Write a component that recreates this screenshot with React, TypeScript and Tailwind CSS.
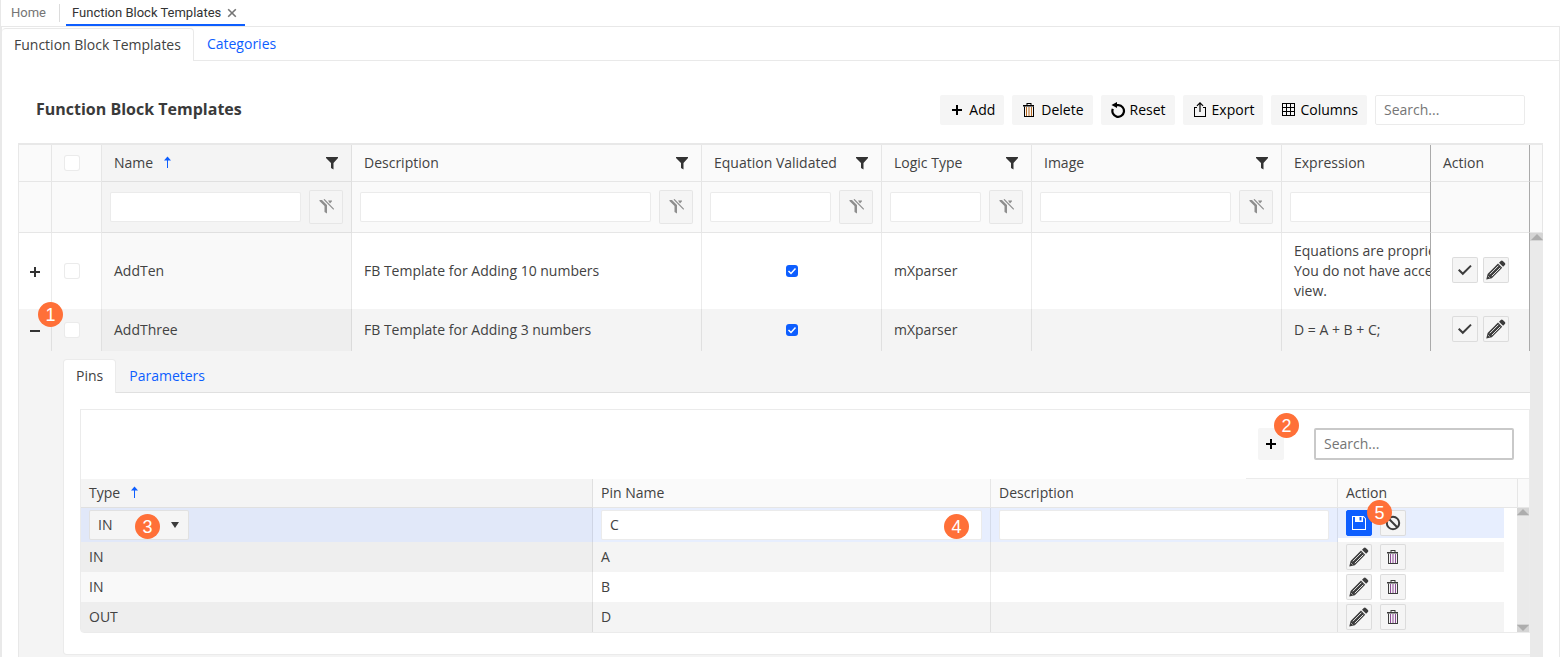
import React from "react";

const head = "border-b border-r border-black/8 bg-[#fafafa]";
const box = "block h-[30px] w-full min-w-0 rounded-xs border border-black/8 bg-white px-2 pb-0.5 text-[#424242] outline-none";

function Icon({ d, size = 16, className = "" }: { d: string; size?: number; className?: string }) {
  return (
    <svg width={size} height={size} viewBox="0 0 16 16" className={`shrink-0 ${className}`} fill="currentColor" fillRule="evenodd" aria-hidden="true">
      <path d={d} />
    </svg>
  );
}

const PLUS = "M7 3h2v4h4v2h-4v4h-2v-4h-4v-2h4z";
const MINUS = "M3 7h10v2h-10z";
const EXPORT = "M8 0l3.5 3.5-.8.8L8.6 2.3V10H7.4V2.3L5.3 4.3l-.8-.8zM2 5h3v1H3v8h10V6h-2V5h3v10H2z";
const GRID = "M2 1h13v13H2zM3 2v3h3V2zM7 2v3h3V2zM11 2v3h3V2zM3 6v3h3V6zM7 6v3h3V6zM11 6v3h3V6zM3 10v3h3v-3zM7 10v3h3v-3zM11 10v3h3v-3z";
const FUNNEL = "M2 2h12v1L9.5 8v6.500L7 13V8L2 3z";
const SORT = "M8.500 1.500L12 5.500H9V13H8V5.500H5z";
const SAVE = "M1 1h11.600l2.400 2.400v11.600H1zM2 2v12h12V3.800L12.200 2H12v5H4V2zM8.500 2v3.500h2V2z";

function Trash({ stripe }: { stripe: string }) {
  return (
    <svg width="16" height="16" viewBox="0 0 16 16" fill="currentColor" className="shrink-0" aria-hidden="true">
      <path d="M5.500 1h5v2H13v1.500H2V3h3.500zM6.500 2v1h3V2z" fillRule="evenodd" />
      <path d="M3 4.500h1V15H3zM12 4.500h1V15h-1zM3 14h10v1H3z" />
      <path d="M5 5h1v9H5zM7.500 5h1v9h-1zM10 5h1v9h-1z" fill={stripe} />
    </svg>
  );
}

function Pencil() {
  return (
    <svg width="20" height="20" viewBox="0 0 20 20" fill="currentColor" className="shrink-0" aria-hidden="true">
      <path d="M.3 19.500L1.600 14 12 3.600l4.200 4.200L5.800 18.200z" />
      <path d="M3.800 14.300L12.400 5.700M5.800 16.200L14.300 7.700" stroke="#f5f5f5" strokeWidth=".9" />
      <path d="M2.200 16.200l1.400 1.400" stroke="#f5f5f5" strokeWidth=".7" />
      <path d="M13 2.700L14.800.900q1-.9 2 0l2.100 2.100q1 1 0 2L17.100 6.800z" />
    </svg>
  );
}

function ResetIcon() {
  return (
    <svg width="16" height="16" viewBox="0 0 16 16" fill="none" stroke="currentColor" strokeWidth="2.200" className="shrink-0" aria-hidden="true">
      <path d="M5.500 3.200H8.500a5.800 5.800 0 1 1-5.700 3.600" />
      <path d="M1.500 3L7 0v6z" fill="currentColor" stroke="none" />
    </svg>
  );
}

function CheckIcon() {
  return (
    <svg width="16" height="16" viewBox="0 0 16 16" fill="none" stroke="currentColor" strokeWidth="2" aria-hidden="true">
      <path d="M1.700 7.800l4.100 4L14 3.600" />
    </svg>
  );
}

function ClearFilter() {
  return (
    <button aria-label="Clear filter" className="flex size-[34px] shrink-0 items-center justify-center rounded-xs border border-black/6 bg-[#f5f5f5] text-[#8e8e8e]">
      <svg width="16" height="16" viewBox="0 0 16 16" fill="currentColor" aria-hidden="true">
        <path d="M1.500 1h2.500l5 5v8.500L6.500 13V7L1.500 2zM10 1.500h4v.8L12 4.500z" />
        <path d="M6 .3L15.800 10.300" stroke="currentColor" strokeWidth="1.200" />
      </svg>
    </button>
  );
}

function Square({ label, children, primary = false }: { label: string; children: React.ReactNode; primary?: boolean }) {
  return (
    <button
      aria-label={label}
      className={`flex size-[26px] shrink-0 items-center justify-center rounded-xs border ${primary ? "border-[#0d5eff] bg-[#0d5eff] text-white" : "border-black/10 bg-[#f5f5f5] text-[#3c3c3c]"}`}
    >
      {children}
    </button>
  );
}

function Badge({ n, className }: { n: number; className: string }) {
  return (
    <span className={`pointer-events-none absolute z-10 flex size-[25px] items-center justify-center rounded-full bg-[#ff7038] font-['Liberation_Sans',sans-serif] text-lg leading-none text-white ${className}`}>
      {n}
    </span>
  );
}

function Tool({ icon, children }: { icon: React.ReactNode; children: string }) {
  return (
    <button className="flex h-[30px] items-center gap-1 rounded-xs bg-[#f5f5f5] px-[9px] text-black">
      {icon}
      {children}
    </button>
  );
}

function Arrow({ down = false }: { down?: boolean }) {
  return (
    <span className="flex h-2 w-full items-center justify-center bg-[#d5d5d5]">
      <svg width="12" height="6" viewBox="0 0 12 6" fill="#adadad" aria-hidden="true">
        <path d={down ? "M0 0h12L6 6z" : "M0 6h12L6 0z"} />
      </svg>
    </span>
  );
}

function Tick({ label }: { label: string }) {
  return <input type="checkbox" aria-label={label} className="block size-4 appearance-none rounded-[3px] border border-black/8 bg-white" />;
}

const columns = [
  { name: "Name", sorted: true },
  { name: "Description" },
  { name: "Equation Validated" },
  { name: "Logic Type" },
  { name: "Image" },
];

const rows = [
  { name: "AddTen", description: "FB Template for Adding 10 numbers", expression: ["Equations are proprietary.", "You do not have access to", "view."], open: false },
  { name: "AddThree", description: "FB Template for Adding 3 numbers", expression: ["D = A + B + C;"], open: true },
];

const pins = [
  { type: "IN", name: "A" },
  { type: "IN", name: "B" },
  { type: "OUT", name: "D" },
];

function PinsGrid() {
  return (
    <div className="rounded-bl border border-black/8">
      <div className="flex h-[69px] justify-end">
        <div className="flex items-center gap-[30px] border-b border-black/8 pl-3 pr-[15px]">
          <div className="relative">
            <button aria-label="Add pin" className="flex h-8 w-[26px] items-center justify-center rounded-xs bg-[#f5f5f5] text-black">
              <Icon d={PLUS} />
            </button>
            <Badge n={2} className="-top-[15px] left-4" />
          </div>
          <input aria-label="Search pins" placeholder="Search..." className="h-8 w-[200px] rounded-xs border-2 border-[#c9c9c9] px-2 pb-0.5 outline-none placeholder:text-[#757575]" />
        </div>
      </div>
      <div className="flex">
        <table className="w-full min-w-0 flex-1 table-fixed border-separate border-spacing-0 text-left">
          <colgroup>
            <col className="w-[512px]" />
            <col className="w-[398px]" />
            <col />
            <col className="w-[166px]" />
            <col className="w-[13px]" />
          </colgroup>
          <thead>
            <tr className="h-[29px]">
              <th className="border-b border-r border-black/8 bg-[#f4f4f4] px-2 font-normal">
                <span className="flex items-center gap-1.5">
                  Type <Icon d={SORT} className="text-[#0d5eff]" />
                </span>
              </th>
              <th className={`${head} px-2 font-normal`}>Pin Name</th>
              <th className={`${head} px-2 font-normal`}>Description</th>
              <th colSpan={2} className="border-b border-black/8 bg-[#fafafa] px-2 font-normal">Action</th>
            </tr>
          </thead>
          <tbody>
            <tr className="h-[34px]">
              <td className="border-r border-black/8 bg-[#e1e8f9] px-2 align-middle">
                <div className="relative w-[100px]">
                  <select aria-label="Pin type" className="block h-[30px] w-full appearance-none rounded-xs border border-black/8 bg-[#f5f5f5] px-2 text-[#424242]">
                    <option>IN</option>
                    <option>OUT</option>
                  </select>
                  <svg width="10" height="7" viewBox="0 0 10 7" className="pointer-events-none absolute right-[9px] top-3" fill="#3c3c3c" aria-hidden="true">
                    <path d="M1 0h8L5 6z" />
                  </svg>
                  <Badge n={3} className="left-[46px] top-1" />
                </div>
              </td>
              <td className="border-r border-black/8 bg-[#e7eefe] px-2">
                <div className="relative">
                  <input aria-label="Pin name" defaultValue="C" className={box} />
                  <Badge n={4} className="right-[13px] top-1" />
                </div>
              </td>
              <td className="border-r border-black/8 bg-[#e7eefe] px-2">
                <input aria-label="Pin description" className={box} />
              </td>
              <td className="align-top">
                <div className="relative flex h-[30px] items-center gap-2 bg-[#e7eefe] pl-2">
                  <Square label="Save" primary>
                    <Icon d={SAVE} />
                  </Square>
                  <Square label="Cancel">
                    <svg width="16" height="16" viewBox="0 0 16 16" fill="none" stroke="currentColor" strokeWidth="2" aria-hidden="true">
                      <circle cx="8" cy="8" r="6.200" />
                      <path d="M3.800 3.800l8.400 8.400" />
                    </svg>
                  </Square>
                  <Badge n={5} className="-top-2 left-[29px]" />
                </div>
              </td>
              <td />
            </tr>
            {pins.map((pin, i) => (
              <tr key={pin.name} className={`h-[30px] ${i % 2 ? "bg-white" : "bg-[#f4f4f4]"}`}>
                <td className={`border-r border-black/8 px-2 ${i % 2 ? "bg-[#f9f9f9]" : "bg-[#eeeeee]"}`}>{pin.type}</td>
                <td className="border-r border-black/8 px-2">{pin.name}</td>
                <td className="border-r border-black/8" />
                <td className="pl-2">
                  <div className="flex gap-2">
                    <Square label={`Edit ${pin.name}`}><Pencil /></Square>
                    <Square label={`Delete ${pin.name}`}><Trash stripe="#8a4a94" /></Square>
                  </div>
                </td>
                <td className="bg-white" />
              </tr>
            ))}
          </tbody>
        </table>
        <div className="flex w-3 flex-col">
          <div className="h-[29px] border-b border-l border-black/8 bg-[#fafafa]" />
          <div className="flex flex-1 flex-col justify-between bg-[#eaeaea]">
            <Arrow />
            <Arrow down />
          </div>
        </div>
      </div>
    </div>
  );
}

function Detail() {
  return (
    <div className="bg-[#f4f4f4] pb-[2px] pl-11 pt-2">
      <div className="flex h-[34px]" role="tablist">
        <button role="tab" aria-selected="true" className="rounded-t border border-b-0 border-black/8 bg-white px-3 pb-px">Pins</button>
        <div className="flex flex-1 border-b border-black/8">
          <button role="tab" aria-selected="false" className="px-[13px] text-[#0d5eff]">Parameters</button>
        </div>
      </div>
      <div className="rounded-bl border-b border-l border-black/8 bg-white pb-[21px] pl-4 pt-4">
        <PinsGrid />
      </div>
    </div>
  );
}

export default function App() {
  return (
    <div className="min-h-screen overflow-hidden bg-white font-['Open_Sans',sans-serif] text-sm leading-5 text-[#424242]">
      <nav className="flex h-[27px] items-stretch border-b border-l border-[#e8e8e8] pl-[10px] font-['Roboto',sans-serif] text-[13px]">
        <a href="#home" className="flex items-center pr-[13px] text-[#757575]">Home</a>
        <span className="my-1 mr-1.5 w-px bg-[#dcdcdc]" />
        <div className="flex items-center gap-1.5 border-b-2 border-[#0d5eff] pl-1.5 pr-2 pt-0.5">
          <a href="#templates" className="text-[#333]">Function Block Templates</a>
          <button aria-label="Close tab" className="text-[#757575]">
            <svg width="10" height="10" viewBox="0 0 10 10" fill="none" stroke="currentColor" strokeWidth="1.600" aria-hidden="true">
              <path d="M1.200 1.200l7.600 7.600M8.800 1.200l-7.600 7.600" />
            </svg>
          </button>
        </div>
      </nav>
      <main className="border-l-2 border-r border-[#e9e9e9]">
        <div className="flex h-[34px] pt-px" role="tablist">
          <button role="tab" aria-selected="true" className="rounded-t border-r border-t border-[#e9e9e9] px-3 pb-px">Function Block Templates</button>
          <div className="flex flex-1 border-b border-[#e9e9e9]">
            <button role="tab" aria-selected="false" className="px-[13px] text-[#0d5eff]">Categories</button>
          </div>
        </div>
        <div className="pl-4 pr-4">
          <header className="flex h-[82px] items-end justify-between pb-[18px] pl-[18px] pr-[18px]">
            <h1 className="pb-1.5 text-base leading-5 font-bold text-[#3a3a3a]">Function Block Templates</h1>
            <div className="flex gap-2">
              <Tool icon={<Icon d={PLUS} />}>Add</Tool>
              <Tool icon={<Trash stripe="#b8691f" />}>Delete</Tool>
              <Tool icon={<ResetIcon />}>Reset</Tool>
              <Tool icon={<Icon d={EXPORT} />}>Export</Tool>
              <Tool icon={<Icon d={GRID} />}>Columns</Tool>
              <input aria-label="Search templates" placeholder="Search..." className="h-[30px] w-[150px] rounded-xs border border-black/8 px-2 pb-0.5 outline-none placeholder:text-[#757575]" />
            </div>
          </header>
          <div className="flex border-l border-t-2 border-[#e8e8e8]">
            <table className="w-full min-w-0 flex-1 table-fixed border-separate border-spacing-0 text-left">
              <colgroup>
                <col className="w-[33px]" />
                <col className="w-[50px]" />
                <col className="w-[250px]" />
                <col className="w-[350px]" />
                <col className="w-[180px]" />
                <col className="w-[150px]" />
                <col className="w-[250px]" />
                <col />
                <col className="w-[100px]" />
              </colgroup>
              <thead>
                <tr className="h-[37px]">
                  <th className={head} />
                  <th className={`${head} pl-3`}><Tick label="Select all" /></th>
                  {columns.map((c) => (
                    <th key={c.name} className={`border-b border-r border-black/8 pl-3 pr-[11px] font-normal ${c.sorted ? "bg-[#f4f4f4]" : "bg-[#fafafa]"}`}>
                      <span className="flex items-center gap-1.5 whitespace-nowrap">
                        {c.name}
                        {c.sorted && <Icon d={SORT} className="text-[#0d5eff]" />}
                        <button aria-label={`Filter ${c.name}`} className="ml-auto text-[#333]"><Icon d={FUNNEL} /></button>
                      </span>
                    </th>
                  ))}
                  <th className="border-b border-black/8 bg-[#fafafa] pl-3 font-normal">Expression</th>
                  <th className="border-x border-b border-b-black/8 border-x-[#aaaaaa] bg-[#fafafa] pl-3 font-normal">Action</th>
                </tr>
                <tr className="h-[51px]">
                  <td className={head} />
                  <td className={head} />
                  {columns.map((c) => (
                    <td key={c.name} className={`border-b border-r border-black/8 px-2 ${c.sorted ? "bg-[#f4f4f4]" : "bg-[#fafafa]"}`}>
                      <div className="flex items-center gap-2">
                        <input aria-label={`${c.name} filter`} className={box} />
                        <ClearFilter />
                      </div>
                    </td>
                  ))}
                  <td className="overflow-hidden border-b border-black/8 bg-[#fafafa] pl-2">
                    <div className="w-[190px]"><input aria-label="Expression filter" className={box} /></div>
                  </td>
                  <td className="border-x border-b border-b-black/8 border-x-[#aaaaaa] bg-[#fafafa]" />
                </tr>
              </thead>
              <tbody>
                {rows.map((r) => (
                  <tr key={r.name} className={r.open ? "h-[42px] bg-[#f4f4f4]" : "h-[76px] bg-white"}>
                    <td className="border-r border-black/8 pt-0.5">
                      <div className="relative flex justify-center">
                        <button aria-label={r.open ? "Collapse row" : "Expand row"} className="text-[#333]">
                          <Icon d={r.open ? MINUS : PLUS} />
                        </button>
                        {r.open && <Badge n={1} className="-top-[21px] left-[19px]" />}
                      </div>
                    </td>
                    <td className="border-r border-black/8 pl-3"><Tick label={`Select ${r.name}`} /></td>
                    <td className={`border-r border-black/8 px-3 ${r.open ? "bg-[#eeeeee]" : "bg-[#f9f9f9]"}`}>{r.name}</td>
                    <td className="border-r border-black/8 px-3">{r.description}</td>
                    <td className="border-r border-black/8">
                      <div className="relative mx-auto size-3">
                        <input type="checkbox" defaultChecked aria-label={`${r.name} equation validated`} className="block size-3 appearance-none rounded-[3px] bg-[#0d5eff]" />
                        <svg width="12" height="12" viewBox="0 0 12 12" className="pointer-events-none absolute inset-0" fill="none" stroke="white" strokeWidth="1.500" aria-hidden="true">
                          <path d="M2.500 6l2.500 2.500 4.500-5" />
                        </svg>
                      </div>
                    </td>
                    <td className="border-r border-black/8 px-3">mXparser</td>
                    <td className="border-r border-black/8" />
                    <td className="overflow-hidden pl-3 whitespace-nowrap">
                      {r.expression.map((line) => <div key={line}>{line}</div>)}
                    </td>
                    <td className="border-x border-[#aaaaaa] pb-0.5">
                      <div className="flex justify-center gap-[5px]">
                        <Square label={`Validate ${r.name}`}><CheckIcon /></Square>
                        <Square label={`Edit ${r.name}`}><Pencil /></Square>
                      </div>
                    </td>
                  </tr>
                ))}
                <tr>
                  <td colSpan={9}><Detail /></td>
                </tr>
              </tbody>
            </table>
            <div className="flex w-[13px] flex-col">
              <div className="h-[37px] border-b border-r border-black/8 bg-[#fafafa]" />
              <div className="h-[51px] border-b border-r border-black/8 bg-[#fafafa]" />
              <div className="flex-1 bg-[#eaeaea]"><Arrow /></div>
            </div>
          </div>
        </div>
      </main>
    </div>
  );
}
